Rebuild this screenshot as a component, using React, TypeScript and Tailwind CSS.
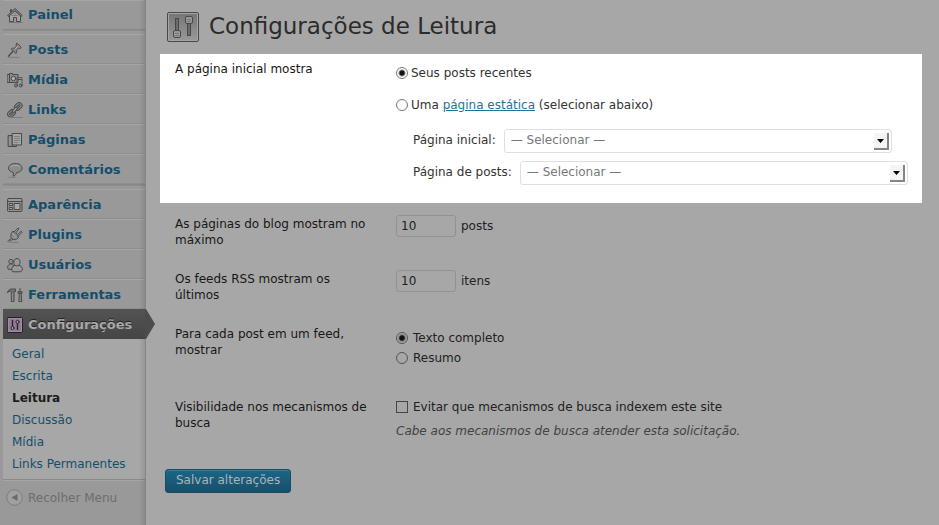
import { useState } from "react";
import type { ReactNode } from "react";

function Icon({ children }: { children: ReactNode }) {
  return (
    <svg
      viewBox="0 0 16 16"
      className="size-4 shrink-0"
      fill="none"
      stroke="#4b4b4b"
      strokeWidth="1"
      strokeLinecap="round"
      strokeLinejoin="round"
      aria-hidden="true"
    >
      {children}
    </svg>
  );
}

const HomeIcon = () => (
  <Icon>
    <path d="M2.500 8.500v6h4v-4h3v4h4v-6L8 3.800z" fill="#a3a3a3" />
    <path d="M3.500 5.500v-3h1v2" />
    <path d="M.8 8.400 8 1.500l7.200 6.900-1 .9L8 3.800 1.800 9.300z" fill="#858585" />
    <path d="M5 8.500h6M8 6v2" strokeWidth=".8" stroke="#777" />
    <path d="M2 15.500h13" stroke="#777" />
  </Icon>
);
const PinIcon = () => (
  <Icon>
    <path d="M9.500 1.500c1.800.3 4.200 2.600 4.600 4.500-.8.700-1.900.6-2.500.2L9.400 8.600c.4 1 .2 2.200-.6 3C7.500 9.900 6 8.200 4.200 7c.8-.9 2-1 3-.7l2.300-2.200c-.4-.8-.5-1.800 0-2.600z" fill="#8a8a8a" />
    <path d="M5.800 9.300 1.500 14.200" strokeWidth="1.300" />
    <path d="M10.500 4.500l-2 2" stroke="#b5b5b5" />
    <path d="M1 15.300h11" stroke="#7c7c7c" />
  </Icon>
);
const MediaIcon = () => (
  <Icon>
    <path d="M.5 2.500h2v-1h3v1h5.500v8H.5z" fill="#8e8e8e" />
    <circle cx="6.500" cy="6.500" r="2.300" fill="#aaa" />
    <path d="M2.500 2.500v8" />
    <path d="M10 13V5.500h5V13" stroke="#5c5c5c" />
    <path d="M10.500 7.500h4" />
    <circle cx="9" cy="13.500" r="1.500" fill="#8b8b8b" />
    <circle cx="13.700" cy="13.500" r="1.500" fill="#8b8b8b" />
  </Icon>
);
const LinkIcon = () => (
  <Icon>
    <g transform="rotate(-45 8 8)">
      <rect x="-1" y="4.800" width="8.400" height="6" rx="3" fill="#868686" />
      <rect x="1.200" y="7" width="4" height="1.600" rx=".8" fill="#a2a2a2" />
      <rect x="8.600" y="4.800" width="8.400" height="6" rx="3" fill="#868686" />
      <rect x="10.800" y="7" width="4" height="1.600" rx=".8" fill="#a2a2a2" />
      <rect x="5" y="6.600" width="6" height="2.400" rx="1.200" fill="#a5a5a5" />
    </g>
    <path d="M3 15.500h13" stroke="#7c7c7c" />
  </Icon>
);
const PagesIcon = () => (
  <Icon>
    <path d="M1.500 3.500h4v11h-4z" fill="#858585" />
    <path d="M5.500 14.500h4v-1" />
    <path d="M5.500 1.500h9v11.500h-9z" fill="#a4a4a4" />
    <path d="M7.500 4.500h5M7.500 6.500h5M7.500 8.500h5M7.500 10.500h3" strokeWidth=".7" stroke="#6e6e6e" />
    <path d="M3 5.500v7" stroke="#a0a0a0" />
  </Icon>
);
const CommentIcon = () => (
  <Icon>
    <path d="M8.500 1.500c4 0 6.500 2 6.500 4.600s-2.300 4.300-5.300 4.400c-.3 1.600-1.500 3-3.700 3.700.5-1.200.6-2.600.2-3.900C3.600 9.900 1.500 8.600 1.500 6.100s2.500-4.600 7-4.600z" fill="#8c8c8c" />
    <path d="M4 4.500c2-1.500 6-1.700 8.500 0" stroke="#aaa" />
    <path d="M2 15.300h7" stroke="#7c7c7c" />
  </Icon>
);
const AppearanceIcon = () => (
  <Icon>
    <rect x=".5" y="1.500" width="14.500" height="13" rx="1" fill="#929292" />
    <path d="M1 4.500h14" />
    <path d="M2.500 3h11" strokeWidth=".7" stroke="#aaa" />
    <path d="M2.500 6.500h3v2h-3zM2.500 10.500h3v2h-3zM7.500 6.500h5.500v6H7.500z" fill="#a8a8a8" />
  </Icon>
);
const PluginIcon = () => (
  <Icon>
    <path d="M5.500 4.500c2-.7 5.800 3.200 6 6-1.700 2.200-4.300 2.800-6.400 1.600C3.200 10.500 3.300 7 5.500 4.500z" fill="#8c8c8c" />
    <path d="M7.300 4.800 11 .9l1 .9-3.300 4.100M10.600 7.600l3.600-3.400.9 1-3.900 4" fill="#a0a0a0" />
    <path d="M4.500 11.500c-1 1.500-2.400.5-3.700 2.700M5.500 12.500c-1.300 1.500-2.600.8-3.500 2.400" />
    <path d="M6 7l3 3.500" stroke="#aaa" />
    <path d="M4 15.400h7" stroke="#7c7c7c" />
  </Icon>
);
const UsersIcon = () => (
  <Icon>
    <circle cx="4" cy="4.500" r="2.200" fill="#939393" />
    <path d="M1 11.800C-.2 9.300 1.500 7 4 7c1 0 2 .5 2.500 1.200l-1 4z" fill="#939393" />
    <path d="M5.500 14.500c-1.700-2.500-.3-5.700 2.700-6.100C5.700 6.200 6.800 1.500 10 1.500s4 4.700 1.700 6.900c4 .4 4.800 4.300 2.500 6.100z" fill="#9a9a9a" />
    <path d="M8.200 8.400c1 .7 2.500.7 3.500 0" />
  </Icon>
);
const ToolsIcon = () => (
  <Icon>
    <path d="M.6 5.500C1 3.300 2.600 2 5 2h3.500v2.500H7v10H4.300v-10C2.800 4 1.500 4.300.6 5.500z" fill="#777" />
    <path d="M13 1.500v4M12.300 7.500 11.800 14.500h3L14.300 7.500M11.500 6.500h3.500V4.500h-3.500z" fill="#858585" />
    <path d="M5.600 6.500v7" stroke="#a0a0a0" strokeWidth=".7" />
  </Icon>
);
const SettingsIcon = () => (
  <Icon>
    <rect x=".5" y=".5" width="15" height="15" rx="1" stroke="#2c1c30" fill="#8d7d91" />
    <rect x="1.700" y="1.700" width="12.600" height="12.600" stroke="#a797aa" strokeWidth=".8" />
    <path d="M5.500 3.500v6M10.500 6v6.500" stroke="#2f2033" strokeWidth="1.400" />
    <circle cx="5.500" cy="11" r="1.500" stroke="#2f2033" fill="#b0a4b2" />
    <circle cx="10.500" cy="4.800" r="1.500" stroke="#2f2033" fill="#b0a4b2" />
  </Icon>
);

const groups = [
  [{ label: "Painel", icon: <HomeIcon /> }],
  [
    { label: "Posts", icon: <PinIcon /> },
    { label: "Mídia", icon: <MediaIcon /> },
    { label: "Links", icon: <LinkIcon /> },
    { label: "Páginas", icon: <PagesIcon /> },
    { label: "Comentários", icon: <CommentIcon /> },
  ],
  [
    { label: "Aparência", icon: <AppearanceIcon /> },
    { label: "Plugins", icon: <PluginIcon /> },
    { label: "Usuários", icon: <UsersIcon /> },
    { label: "Ferramentas", icon: <ToolsIcon /> },
  ],
];

const submenu = ["Geral", "Escrita", "Leitura", "Discussão", "Mídia", "Links Permanentes"];

function Sidebar() {
  return (
    <nav className="relative flex w-[146px] shrink-0 flex-col border-r border-[#858585] bg-[#999] pl-[3px]">
      {groups.map((group, index) => (
        <div
          key={index}
          className={index < 2 ? "mb-1 border-b border-[#868686] shadow-[0_1px_0_#8f8f8f]" : ""}
        >
          {group.map((item) => (
            <a
              key={item.label}
              href="#"
              className={`flex items-center gap-[5px] border-t border-[#a6a6a6] pl-1 text-[13px] font-bold text-[#154e6b] ${
                index === 0 ? "h-[29px]" : "h-[30px] border-b border-b-[#8f8f8f] pt-0.5"
              }`}
            >
              {item.icon}
              {item.label}
            </a>
          ))}
        </div>
      ))}
      <a
        href="#"
        className="relative z-10 flex h-[30px] items-center gap-[5px] bg-linear-to-b from-[#535353] to-[#454545] pt-0.5 pl-1 text-[13px] font-bold text-[#a8a8a8] [text-shadow:0_-1px_0_#222]"
      >
        <SettingsIcon />
        Configurações
        <svg viewBox="0 0 11 30" className="absolute top-0 left-full h-[30px] w-[11px]" aria-hidden="true">
          <path d="M0 0h1l9 15-9 15H0z" fill="#4c4c4c" />
        </svg>
      </a>
      <ul className="border-b border-[#8a8a8a] bg-[#a7a7a7] py-1 text-[12px] leading-[22px]">
        {submenu.map((label) => (
          <li key={label}>
            <a
              href="#"
              className={`block pl-[9px] ${label === "Leitura" ? "font-bold text-[#1c1c1c]" : "text-[#154e6b]"}`}
            >
              {label}
            </a>
          </li>
        ))}
      </ul>
      <button type="button" className="flex h-[34px] items-center gap-[5px] border-t border-[#a6a6a6] pl-[3px] text-[12px] text-[#6d6d6d]">
        <svg viewBox="0 0 17 17" className="size-[17px]" aria-hidden="true">
          <circle cx="8.500" cy="8.500" r="7.800" fill="#a0a0a0" stroke="#7d7d7d" />
          <path d="M11.500 5v7l-6-3.500z" fill="#6a6a6a" />
        </svg>
        Recolher Menu
      </button>
      <div className="pointer-events-none absolute inset-y-0 right-0 w-1.5 bg-linear-to-r from-transparent to-black/10" />
    </nav>
  );
}

function Row({ title, children }: { title: string; children: ReactNode }) {
  return (
    <div className="flex">
      <div className="w-[221px] shrink-0 pt-px pr-5 leading-4 text-[#171717]">{title}</div>
      <div className="min-w-0 flex-1">{children}</div>
    </div>
  );
}

function PageSelect({ id, label }: { id: string; label: string }) {
  return (
    <div className="flex h-6 items-center gap-2">
      <label htmlFor={id} className="shrink-0 pb-0.5">{label}</label>
      <div className="relative w-[388px] min-w-0">
        <select
          id={id}
          className="block h-6 w-full appearance-none rounded-[3px] border border-[#dfdfdf] bg-white px-1.5 pb-0.5 text-[12px] text-[#777]"
        >
          <option>— Selecionar —</option>
        </select>
        <span className="pointer-events-none absolute top-1 right-[3px] flex h-[17px] w-[15px] items-center justify-center border-r-2 border-b-2 border-[#858585] bg-[#f4f4f2]">
          <svg viewBox="0 0 7 4" className="h-1 w-[7px]" aria-hidden="true">
            <path d="M0 0h7L3.500 4z" fill="#000" />
          </svg>
        </span>
      </div>
    </div>
  );
}

const radio =
  "m-0 size-3 shrink-0 appearance-none rounded-full border checked:bg-[radial-gradient(circle,#111_0_2px,transparent_4px)]";

export default function App() {
  const [home, setHome] = useState("posts");
  const [feed, setFeed] = useState("full");
  return (
    <div className="flex min-h-screen bg-[#a7a7a7] font-['DejaVu_Sans',sans-serif] text-[12px] text-[#222]">
      <Sidebar />
      <main className="min-w-0 flex-1 pr-[17px] pl-3.5">
        <header className="flex h-[54px] items-center gap-2.5 pl-[7px]">
          <svg viewBox="0 0 32 32" className="size-8" fill="none" aria-hidden="true">
            <defs>
              <linearGradient id="panel" x1="0" y1="0" x2="0" y2="1">
                <stop offset="0" stopColor="#767676" />
                <stop offset="1" stopColor="#989898" />
              </linearGradient>
            </defs>
            <rect x=".5" y="1.500" width="31" height="29" rx="1.500" fill="#a5a5a5" stroke="#484848" />
            <rect x="2" y="3" width="28" height="26" fill="url(#panel)" />
            <rect x="8.500" y="7.500" width="3" height="17" fill="#6c6c6c" stroke="#484848" />
            <rect x="20.500" y="7.500" width="3" height="17" fill="#6c6c6c" stroke="#484848" />
            <rect x="6.500" y="19.500" width="7" height="7" rx="1.500" fill="#999" stroke="#484848" />
            <rect x="18.500" y="5.500" width="7" height="7" rx="1.500" fill="#999" stroke="#484848" />
            <path d="M8 22.500h4M8 24.500h4M20 8.500h4M20 10.500h4" stroke="#777" />
          </svg>
          <h1 className="pb-0.5 text-[23px] text-[#2b2b2b]">Configurações de Leitura</h1>
        </header>

        <section className="bg-white pt-1.5 pb-[18px] pl-[15px] text-[#333]">
          <Row title="A página inicial mostra">
            <label className="mt-[5px] flex h-4 items-center gap-[3px]">
              <input type="radio" name="home" className={`${radio} border-[#777]`} checked={home === "posts"} onChange={() => setHome("posts")} />
              Seus posts recentes
            </label>
            <div className="mt-4 flex h-4 items-center gap-[3px]">
              <input id="home-page" type="radio" name="home" className={`${radio} border-[#777]`} checked={home === "page"} onChange={() => setHome("page")} />
              <label htmlFor="home-page">
                Uma <a href="#" className="text-[#21759b] underline">página estática</a> (selecionar abaixo)
              </label>
            </div>
            <div className="mt-4 flex flex-col gap-2 pl-[17px]">
              <PageSelect id="front-page" label="Página inicial:" />
              <PageSelect id="posts-page" label="Página de posts:" />
            </div>
          </Row>
        </section>

        <section className="flex flex-col pt-3 pl-[15px]">
          <Row title="As páginas do blog mostram no máximo">
            <label className="flex h-[55px] items-start gap-[5px] leading-[22px]">
              <input type="text" defaultValue="10" className="h-[22px] w-[60px] rounded-[3px] border border-[#929292] bg-transparent px-1" />
              posts
            </label>
          </Row>
          <Row title="Os feeds RSS mostram os últimos">
            <label className="flex h-[55px] items-start gap-[5px] leading-[22px]">
              <input type="text" defaultValue="10" className="h-[22px] w-[60px] rounded-[3px] border border-[#929292] bg-transparent px-1" />
              itens
            </label>
          </Row>
          <Row title="Para cada post em um feed, mostrar">
            <div className="flex h-[73px] flex-col pt-[3px]">
              <label className="flex h-5 items-center gap-[5px]">
                <input type="radio" name="feed" className={`${radio} border-[#555]`} checked={feed === "full"} onChange={() => setFeed("full")} />
                Texto completo
              </label>
              <label className="flex h-5 items-center gap-[5px]">
                <input type="radio" name="feed" className={`${radio} border-[#555]`} checked={feed === "summary"} onChange={() => setFeed("summary")} />
                Resumo
              </label>
            </div>
          </Row>
          <Row title="Visibilidade nos mecanismos de busca">
            <label className="mt-px flex h-4 items-center gap-[5px]">
              <input type="checkbox" className="m-0 size-3 shrink-0 appearance-none border border-[#444] checked:bg-[#444]" />
              Evitar que mecanismos de busca indexem este site
            </label>
            <p className="mt-2 leading-4 text-[#424242] italic">Cabe aos mecanismos de busca atender esta solicitação.</p>
          </Row>
        </section>

        <button
          type="button"
          className="mt-[30px] ml-[5px] h-6 rounded-[3px] border border-[#164c64] bg-linear-to-b from-[#1b6687] to-[#174f6b] px-2.5 pb-0.5 text-[#a9b5ba] shadow-[inset_0_1px_0_#3c7891]"
        >
          Salvar alterações
        </button>
      </main>
    </div>
  );
}
